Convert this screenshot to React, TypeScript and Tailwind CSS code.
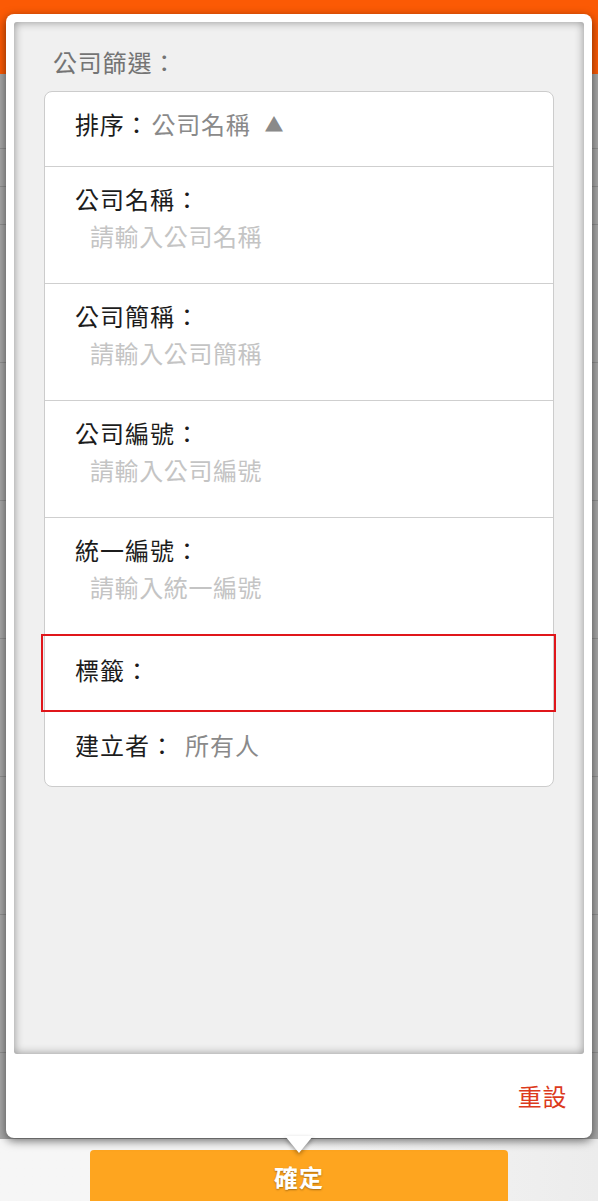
import React from "react";

const font = { fontFamily: '"Noto Sans CJK TC", "Noto Sans", sans-serif' };

function InputRow({ label, placeholder }: { label: string; placeholder: string }) {
  return (
    <div className="border-b border-[#cfcfcf] pl-[30px] pt-[17px] pb-[32px]">
      <div className="text-[24px] leading-[30px] text-[#1c1c1c] tracking-[1px]">{label}</div>
      <div className="mt-[7px] pl-[15px] text-[24px] leading-[30px] text-[#c4c4c4] tracking-[0.6px]">
        {placeholder}
      </div>
    </div>
  );
}

export default function App() {
  const bgRows = [76, 38, 38, 138, 138, 138, 138, 138, 138];
  return (
    <div className="relative w-[598px] h-[1201px] overflow-hidden bg-[#a7a7a7]" style={font}>
      {/* background page */}
      <div className="flex flex-col h-full">
        <div className="h-[74px] bg-[#fb5a05] shadow-[0_2px_3px_rgba(0,0,0,0.3)]" />
        {bgRows.map((h, i) => (
          <div
            key={i}
            className="border-b border-[#8f8f8f] bg-[#a7a7a7]"
            style={{ height: i === 0 ? h - 1 : h }}
          />
        ))}
        <div className="flex-1 bg-[#a7a7a7]" />
        <div className="h-[62px] bg-gradient-to-r from-[#f6f6f6] via-[#f6f6f6] to-[#ececec] flex justify-center">
          <div className="mt-[11px] w-[418px] h-[56px] rounded-t-[4px] bg-[#fea51f] flex justify-center pt-[12px]">
            <span
              className="text-[24px] leading-[30px] font-bold text-white tracking-[1px]"
              style={{ textShadow: "0 1px 2px rgba(0,0,0,0.35)" }}
            >
              確定
            </span>
          </div>
        </div>
      </div>

      {/* popup */}
      <div className="absolute left-[6px] top-[14px] w-[586px] h-[1124px] rounded-[8px] bg-white shadow-[0_3px_10px_rgba(0,0,0,0.55)] flex flex-col p-[8px] pb-0">
        <div className="h-[1032px] rounded-[3px] bg-[#f0f0f0] shadow-[inset_0_0_10px_rgba(0,0,0,0.4)] px-[30px] pt-[25px]">
          <div className="pl-[9px] text-[24px] leading-[30px] text-[#747474] tracking-[0.8px]">公司篩選：</div>
          <div className="mt-[14px] rounded-[8px] border border-[#cccccc] bg-white">
            <div className="flex items-center border-b border-[#cfcfcf] pl-[30px] pt-[17px] pb-[27px] text-[24px] leading-[30px] tracking-[0.8px]">
              <span className="text-[#1c1c1c]">排序：</span>
              <span className="ml-[2px] text-[#8a8a8a]">公司名稱</span>
              <span className="ml-[14px] text-[19px] text-[#8a8a8a]">▲</span>
            </div>
            <InputRow label="公司名稱：" placeholder="請輸入公司名稱" />
            <InputRow label="公司簡稱：" placeholder="請輸入公司簡稱" />
            <InputRow label="公司編號：" placeholder="請輸入公司編號" />
            <InputRow label="統一編號：" placeholder="請輸入統一編號" />
            <div className="relative h-[77px] pl-[30px] pt-[20px] text-[24px] leading-[30px] text-[#1c1c1c] tracking-[1px]">
              標籤：
              <div className="absolute -left-[4px] -right-[3px] -top-[1px] bottom-0 border-2 border-[#e0161b]" />
            </div>
            <div className="pl-[30px] pt-[18px] pb-[26px] text-[24px] leading-[30px] tracking-[1px]">
              <span className="text-[#1c1c1c]">建立者：</span>
              <span className="ml-[10px] text-[#8a8a8a]">所有人</span>
            </div>
          </div>
        </div>
        <div className="flex-1 flex items-center justify-end pr-[17px]">
          <span className="text-[24px] leading-[30px] text-[#dc3a1c] tracking-[0.6px]">重設</span>
        </div>
      </div>

      {/* arrow */}
      <svg
        className="absolute left-[284px] top-[1136px]"
        width="30"
        height="20"
        viewBox="0 0 30 20"
        style={{ filter: "drop-shadow(0 2px 2px rgba(0,0,0,0.35))" }}
      >
        <polygon points="1,0 29,0 15,17" fill="#ffffff" />
      </svg>
    </div>
  );
}
